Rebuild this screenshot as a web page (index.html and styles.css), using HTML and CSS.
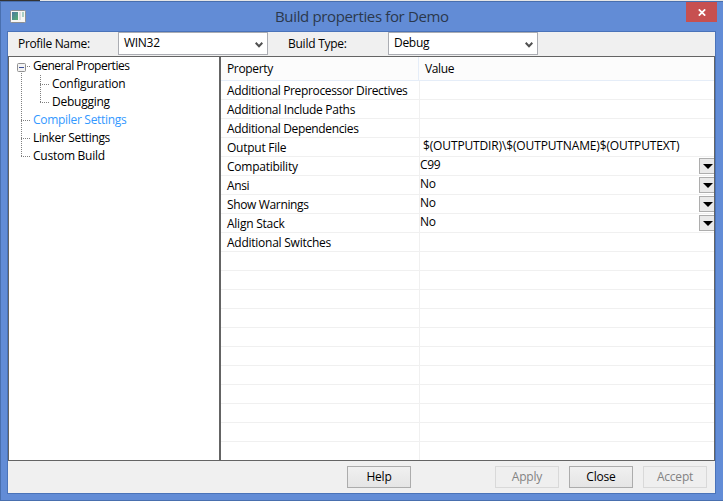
FILE: index.html
```html
<!DOCTYPE html>
<html lang="en">
<head>
<meta charset="utf-8">
<title>Build properties for Demo</title>
<link rel="stylesheet" href="styles.css">
</head>
<body>
<div class="backdrop"></div>
<div class="window">
  <header class="titlebar">
    <svg class="app-icon" width="16" height="13" viewBox="0 0 16 13">
      <defs><linearGradient id="g" x1="0" y1="0" x2="1" y2="1"><stop offset="0" stop-color="#4a78a0"/><stop offset="1" stop-color="#56b070"/></linearGradient></defs>
      <rect x=".5" y=".5" width="15" height="12" rx="1" fill="#f6f6f4" stroke="#8d8f92"/>
      <rect x="2" y="2" width="6" height="8" fill="url(#g)"/>
      <rect x="9" y="2" width="2" height="8" fill="#dedede"/>
      <rect x="12" y="2" width="2" height="5" fill="#a9cfc4"/>
    </svg>
    <h1 class="title">Build properties for Demo</h1>
    <button class="close"><svg width="8" height="7" viewBox="0 0 8 7"><path d="M.8 .3 7.2 6.7M7.2 .3 .8 6.7" stroke="#fff" stroke-width="1.7"/></svg></button>
  </header>
  <main class="client">
    <div class="profile">
      <label class="lab-name"><span>Profile Name:</span></label>
      <div class="combo"><span>WIN32</span><svg width="8" height="6" viewBox="0 0 8 6"><path d="M.7 .8 4 4.2 7.3 .8" fill="none" stroke="#505050" stroke-width="2"/></svg></div>
      <label class="lab-type"><span>Build Type:</span></label>
      <div class="combo"><span>Debug</span><svg width="8" height="6" viewBox="0 0 8 6"><path d="M.7 .8 4 4.2 7.3 .8" fill="none" stroke="#505050" stroke-width="2"/></svg></div>
    </div>
    <div class="panes">
      <nav class="tree">
        <svg class="lines" width="44" height="110" viewBox="0 0 44 110">
          <g stroke="#808080" stroke-dasharray="1 1" fill="none">
            <path d="M12.5 16V100M12 63.500H22M12 81.500H22M12 99.500H22M18 9.500H22M31.500 18V46M31 27.500H41M31 45.500H41"/>
          </g>
          <rect x="8.500" y="6.500" width="8" height="8" rx="1" fill="#f4f4f4" stroke="#919191"/>
          <path d="M10 10.500H15" stroke="#3b4f9a"/>
        </svg>
        <div class="node"><span class="snug">General Properties</span></div>
        <div class="node sub"><span class="loose">Configuration</span></div>
        <div class="node sub"><span class="loose">Debugging</span></div>
        <div class="node active"><span class="wide">Compiler Settings</span></div>
        <div class="node"><span>Linker Settings</span></div>
        <div class="node"><span class="loose">Custom Build</span></div>
      </nav>
      <section class="grid">
        <div class="head"><div><span>Property</span></div><div><span>Value</span></div></div>
        <div class="row"><div><span>Additional Preprocessor Directives</span></div><div></div></div>
        <div class="row"><div><span class="wide">Additional Include Paths</span></div><div></div></div>
        <div class="row"><div><span>Additional Dependencies</span></div><div></div></div>
        <div class="row"><div><span class="loose">Output File</span></div><div class="edit"><span class="path">$(OUTPUTDIR)\$(OUTPUTNAME)$(OUTPUTEXT)</span></div></div>
        <div class="row"><div><span class="loose">Compatibility</span></div><div class="choice"><span>C99</span><i class="drop"></i></div></div>
        <div class="row"><div><span>Ansi</span></div><div class="choice"><span>No</span><i class="drop"></i></div></div>
        <div class="row"><div><span>Show Warnings</span></div><div class="choice"><span>No</span><i class="drop"></i></div></div>
        <div class="row"><div><span class="loose">Align Stack</span></div><div class="choice"><span>No</span><i class="drop"></i></div></div>
        <div class="row"><div><span class="loose">Additional Switches</span></div><div></div></div>
        <div class="row"><div></div><div></div></div>
        <div class="row"><div></div><div></div></div>
        <div class="row"><div></div><div></div></div>
        <div class="row"><div></div><div></div></div>
        <div class="row"><div></div><div></div></div>
        <div class="row"><div></div><div></div></div>
        <div class="row"><div></div><div></div></div>
        <div class="row"><div></div><div></div></div>
        <div class="row"><div></div><div></div></div>
        <div class="row"><div></div><div></div></div>
        <div class="row last"><div></div><div></div></div>
      </section>
    </div>
    <footer class="actions">
      <button class="btn help">Help</button>
      <button class="btn" disabled>Apply</button>
      <button class="btn">Close</button>
      <button class="btn" disabled>Accept</button>
    </footer>
  </main>
</div>
</body>
</html>
```
FILE: styles.css
```css
* { box-sizing: border-box; }
body { margin: 0; width: 723px; height: 501px; overflow: hidden; font: 12px/18px "Open Sans", "Noto Sans", sans-serif; letter-spacing: -0.35px; color: #000; }
span { white-space: pre; }
.snug { letter-spacing: -0.5px; }
.wide { letter-spacing: -0.3px; }
.loose { letter-spacing: -0.25px; }
.path { letter-spacing: -0.14px; }
.backdrop { height: 1px; background: linear-gradient(90deg, #333 0 40px, #e6e6e6 40px); }
.window { height: 500px; background: #628cd6; border: 1px solid #496fae; border-right: 0; padding: 0 7px 6px 6px; }
.titlebar { height: 29px; display: flex; align-items: flex-start; }
.app-icon { margin: 8px 0 0 3px; flex: none; }
.title { flex: 1; margin: 3px 0 0; padding-left: 249px; font-size: 15px; line-height: 22px; font-weight: 400; letter-spacing: -0.35px; color: #2b384c; white-space: nowrap; }
.close { width: 31px; height: 20px; margin-right: -1px; border: 0; padding: 0 0 0 1px; background: #c75050; display: flex; align-items: center; justify-content: center; }
.client { width: 709px; height: 463px; border: 1px solid #4a73b9; background: #f0f0f0; }
.profile { height: 24px; display: flex; }
.lab-name { width: 110px; padding: 3px 0 0 10px; letter-spacing: -0.33px; }
.lab-type { width: 120px; padding: 3px 0 0 20px; letter-spacing: -0.25px; }
.combo { width: 150px; height: 23px; border: 1px solid #abadb3; background: #fff; display: flex; justify-content: space-between; padding: 1px 4px 0 5px; letter-spacing: -0.3px; }
.combo svg { margin-top: 8px; }
.panes { width: 707px; height: 405px; border: 1px solid #646464; background: #fff; display: flex; }
.tree { width: 212px; border-right: 2px solid #646464; position: relative; flex: none; }
.lines { position: absolute; left: 0; top: 0; }
.node { height: 18px; padding-left: 24px; }
.sub { padding-left: 43px; }
.active { color: #3399ff; }
.grid { flex: 1; overflow: hidden; }
.head, .row { display: grid; grid-template-columns: 199px 1fr; height: 19px; border-bottom: 1px solid #f0f0f0; }
.head { grid-template-columns: 198px 1fr; height: 24px; background: #fcfcfc; border-color: #e5edf8; }
.head > div { padding: 3px 0 0 6px; height: 23px; }
.head > div:first-child { border-right: 1px solid #e5edf8; }
.row > div { padding: 1px 0 0 6px; height: 18px; line-height: 18px; }
.row > div:first-child { border-right: 1px solid #f0f0f0; height: 19px; }
.row > .edit { padding: 0 0 0 3px; line-height: 16px; }
.row > .choice { padding: 0; line-height: 16px; display: flex; justify-content: space-between; }
.drop { width: 15px; height: 16px; margin-top: 1px; border: 1px solid #adadad; border-right: 0; background: #eaeaea; display: flex; align-items: center; justify-content: center; }
.drop::after { content: ""; border: 5px solid transparent; border-top-color: #000; border-bottom: 0; margin: 1px 0 0 2px; }
.last { border: 0; }
.actions { display: flex; justify-content: flex-end; gap: 10px; padding: 5px 8px 0 0; }
.btn { width: 64px; height: 22px; border: 1px solid #acacac; background: linear-gradient(#f0f0f0, #e5e5e5); padding: 0; font: 12px/18px "Open Sans", sans-serif; letter-spacing: -0.2px; color: #000; }
.btn:disabled { border-color: #d9d9d9; background: #efefef; color: #838383; }
.help { margin-right: 74px; }
```
